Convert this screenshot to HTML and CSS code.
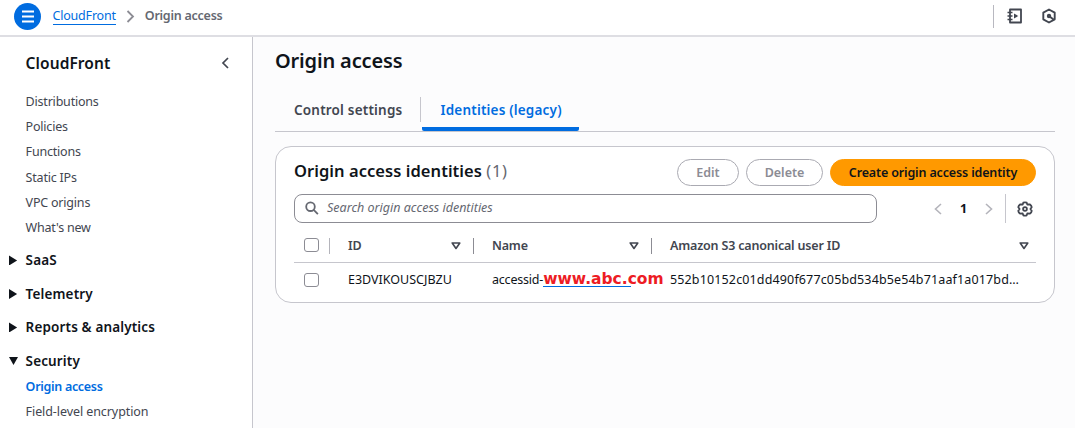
FILE: index.html
```html
<!DOCTYPE html>
<html lang="en">
<head>
<meta charset="utf-8">
<title>Origin access</title>
<link rel="stylesheet" href="styles.css">
</head>
<body>
<header class="topbar">
  <button class="menu" aria-label="Menu"><svg width="27" height="27" viewBox="0 0 27 27"><path d="M8 8.500h12M8 13.500h12M8 18.500h12" stroke="#fff" stroke-width="2"/></svg></button>
  <nav class="crumbs">
    <a class="crumb-link" href="#">CloudFront</a>
    <svg class="crumb-sep" width="9" height="13" viewBox="0 0 9 13"><path d="M1.500 1l5.500 5.500L1.500 12" fill="none" stroke="#8c8c94" stroke-width="1.800"/></svg>
    <span class="crumb-current">Origin access</span>
  </nav>
  <div class="tools">
    <svg width="16" height="16" viewBox="0 0 16 16" fill="none" stroke="#424650" stroke-width="1.800"><path d="M3 1.500h11v13H3z" stroke-linejoin="round"/><path d="M.5 4.500h5M.5 8h5M.5 11.500h5" stroke-width="1.500"/><path d="M7 5.500v5l4.300-2.500z" fill="#424650" stroke="none"/></svg>
    <svg width="16" height="16" viewBox="0 0 16 16" fill="none" stroke="#424650" stroke-width="1.900"><path d="M8 1.500l5.700 3.200v6.600L8 14.500l-5.700-3.200V4.700z" stroke-linejoin="round"/><circle cx="8" cy="8" r="2.200" fill="#424650" stroke="none"/><path d="M8 8l4.500 3.500"/></svg>
  </div>
</header>
<div class="shell">
  <aside class="sidebar">
    <div class="side-head"><span class="side-title">CloudFront</span><svg width="9" height="12" viewBox="0 0 9 12"><path d="M7 1L2 6l5 5" fill="none" stroke="#424650" stroke-width="1.700"/></svg></div>
    <ul class="links">
      <li>Distributions</li><li>Policies</li><li>Functions</li><li>Static IPs</li><li>VPC origins</li><li>What's new</li>
    </ul>
    <div class="group"><i class="arrow"></i><span>SaaS</span></div>
    <div class="group"><i class="arrow"></i><span>Telemetry</span></div>
    <div class="group"><i class="arrow"></i><span>Reports &amp; analytics</span></div>
    <div class="group"><i class="arrow open"></i><span>Security</span></div>
    <ul class="links sub"><li class="active">Origin access</li><li>Field-level encryption</li></ul>
  </aside>
  <main class="main">
    <h1>Origin access</h1>
    <div class="tabs">
      <div class="tab"><span>Control settings</span></div>
      <div class="tab selected"><span>Identities (legacy)</span></div>
    </div>
    <section class="card">
      <div class="card-head">
        <h2>Origin access identities <span class="count">(1)</span></h2>
        <button class="btn edit">Edit</button>
        <button class="btn delete">Delete</button>
        <button class="btn primary">Create origin access identity</button>
      </div>
      <div class="filter">
        <div class="search"><svg width="14" height="14" viewBox="0 0 14 14" fill="none" stroke="#656871" stroke-width="1.800"><circle cx="5.500" cy="5.700" r="4.300"/><path d="M8.700 8.900l4.200 4.200"/></svg><span>Search origin access identities</span></div>
        <div class="pager">
          <svg width="8" height="12" viewBox="0 0 8 12"><path d="M7 1L1.500 6 7 11" fill="none" stroke="#b4b4bb" stroke-width="1.600"/></svg>
          <b>1</b>
          <svg width="8" height="12" viewBox="0 0 8 12"><path d="M1 1l5.500 5L1 11" fill="none" stroke="#b4b4bb" stroke-width="1.600"/></svg>
        </div>
        <div class="prefs"><svg width="16" height="16" viewBox="0 0 16 16" fill="none" stroke="#424650" stroke-width="1.800" stroke-linejoin="round"><path d="M6.300 1.700Q8 1 9.700 1.700L10.300 3.500 13 3.400Q14.500 4.500 14.700 6.200L13.400 8 14.700 9.800Q14.500 11.500 13 12.600L10.300 12.500 9.700 14.300Q8 15 6.300 14.300L5.700 12.500 3 12.600Q1.500 11.500 1.300 9.800L2.600 8 1.300 6.200Q1.500 4.500 3 3.400L5.700 3.500z"/><circle cx="8" cy="8" r="1.900"/></svg></div>
      </div>
      <div class="row head">
        <div class="check"><i class="box"></i></div>
        <div class="cell"><span>ID</span><svg class="sort" width="10" height="8" viewBox="0 0 10 8"><path d="M1.200 1h7.600L5 6.500z"/></svg></div>
        <div class="cell"><span>Name</span><svg class="sort" width="10" height="8" viewBox="0 0 10 8"><path d="M1.200 1h7.600L5 6.500z"/></svg></div>
        <div class="cell"><span>Amazon S3 canonical user ID</span><svg class="sort" width="10" height="8" viewBox="0 0 10 8"><path d="M1.200 1h7.600L5 6.500z"/></svg></div>
      </div>
      <div class="row data">
        <div class="check"><i class="box"></i></div>
        <div class="cell id"><span>E3DVIKOUSCJBZU</span></div>
        <div class="cell name"><span>accessid-</span><strong>www.abc.com</strong></div>
        <div class="cell user"><span>552b10152c01dd490f677c05bd534b5e54b71aaf1a017bd…</span></div>
      </div>
    </section>
  </main>
</div>
</body>
</html>
```
FILE: styles.css
```css
* { box-sizing: border-box; }
body { margin: 0; width: 1075px; height: 428px; overflow: hidden; background: #fff; color: #0f141a; font: 12.5px/20px "Noto Sans", "Open Sans", sans-serif; }
ul, h1, h2 { margin: 0; padding: 0; list-style: none; }
button { font: inherit; padding: 0; }
svg { display: block; flex: none; }
.topbar { height: 37px; border-bottom: 2px solid #dedee3; display: flex; align-items: center; padding: 0 18px 3px 14px; }
.menu { width: 27px; height: 27px; border: 0; border-radius: 50%; background: #006ce0; }
.crumbs { display: flex; align-items: center; flex: 1; margin-left: 11.500px; }
.crumb-link { color: #006ce0; text-decoration: none; border-bottom: 1px solid #006ce0; line-height: 16px; letter-spacing: -.2px; }
.crumb-sep { margin: 1px 10px 0 10px; }
.crumb-current { color: #656871; font-weight: 600; letter-spacing: -.25px; }
.tools { height: 23px; border-left: 1px solid #b8b8c0; display: flex; align-items: center; gap: 18px; padding-left: 13px; }
.shell { display: flex; height: 391px; }
.sidebar { width: 253px; border-right: 1px solid #c6c6cd; }
.side-head { display: flex; justify-content: space-between; align-items: center; padding: 15px 22px 0 25.600px; height: 37px; }
.side-title { font-size: 15.500px; font-weight: 600; letter-spacing: .08px; }
.links { padding: 15px 0 0 25.600px; color: #424650; letter-spacing: -.2px; }
.links li { height: 25.200px; line-height: 25px; white-space: nowrap; }
.group { display: flex; align-items: center; height: 33.500px; padding-left: 9px; font-size: 13.500px; font-weight: 600; letter-spacing: .14px; }
.links + .group { margin-top: 3.500px; }
.group span { margin-left: 7.600px; }
.arrow { width: 9px; height: 10px; background: #0f141a; clip-path: polygon(0 0, 90% 50%, 0 100%); }
.arrow.open { height: 8px; clip-path: polygon(0 0, 100% 0, 50% 100%); }
.links.sub { padding-top: 0; margin-top: -4px; letter-spacing: -.08px; }
.links .active { color: #006ce0; font-weight: 600; letter-spacing: -.3px; }
.main { flex: 1; background: #fcfcfd; padding: 10px 20px 0 22px; }
h1 { font-size: 20px; line-height: 28px; font-weight: 600; letter-spacing: -.16px; }
.tabs { display: flex; height: 47px; margin-top: 10px; border-bottom: 1px solid #c6c6cd; }
.tab { display: flex; padding: 15px 0 0 19px; width: 146px; font-size: 13.500px; font-weight: 600; color: #424650; line-height: 20px; letter-spacing: .19px; white-space: nowrap; background: linear-gradient(#c6c6cd, #c6c6cd) right 12px / 1px 25px no-repeat; }
.tab.selected { width: 157px; margin-left: 1px; padding-left: 18.500px; color: #006ce0; background: linear-gradient(#006ce0, #006ce0) bottom / 100% 4px no-repeat; border-radius: 2px; }
.card { margin-top: 14px; height: 157px; border: 1px solid #c6c6cd; border-radius: 16px; background: #fff; padding: 12px 18px 0; }
.card-head { display: flex; height: 27px; }
h2 { flex: 1; font-size: 16.500px; line-height: 24px; font-weight: 600; letter-spacing: .05px; white-space: nowrap; }
.count { color: #656871; font-weight: 400; letter-spacing: .7px; }
.btn { height: 27px; border-radius: 14px; border: 1px solid #aaaab2; background: #fff; color: #8c8c94; font-weight: 600; line-height: 23px; padding-bottom: 1px; white-space: nowrap; }
.edit { width: 62px; margin-right: 7px; }
.delete { width: 77px; margin-right: 7px; }
.primary { width: 206px; color: #0f141a; background: #ff9900; border-color: #ff9900; letter-spacing: -.15px; }
.filter { display: flex; margin-top: 8px; height: 29px; }
.search { width: 583px; border: 1px solid #8c8c94; border-radius: 8px; display: flex; align-items: center; padding: 0 0 1px 10px; color: #656871; font-style: italic; }
.search span { margin-left: 8px; }
.pager { display: flex; align-items: center; width: 128px; padding-left: 57px; }
.pager b { width: 43px; text-align: center; }
.prefs { display: flex; align-items: center; border-left: 1px solid #c6c6cd; padding-left: 10.500px; }
.row { display: grid; grid-template-columns: 36px 144px 178px 1fr; align-items: center; }
.row.head { height: 40px; padding-top: 6px; border-bottom: 1px solid #c6c6cd; color: #424650; font-weight: 600; letter-spacing: -.18px; }
.head .check, .head .cell { height: 16px; border-right: 1px solid #b4b4bb; }
.head .cell { border-color: #8c8c94; }
.head .cell:last-child { border: 0; }
.check { padding-left: 10px; display: flex; align-items: center; }
.head .check { padding-bottom: 2px; }
.box { width: 15px; height: 14px; border: 1px solid #8c8c94; border-radius: 3px; }
.cell { display: flex; align-items: center; padding-left: 18px; white-space: nowrap; }
.sort { margin: 0 12px 0 auto; fill: none; stroke: #424650; stroke-width: 1.600; stroke-linejoin: round; }
.head .cell:last-child .sort { margin-right: 7px; }
.row.data { height: 34px; }
.name > span { letter-spacing: -.2px; }
.name strong { height: 14px; color: #ed1c24; font: 700 15.500px/12px "DejaVu Sans", sans-serif; background: linear-gradient(#006ce0, #006ce0) left bottom / 88px 1px no-repeat; }
.user { letter-spacing: .14px; }
```
